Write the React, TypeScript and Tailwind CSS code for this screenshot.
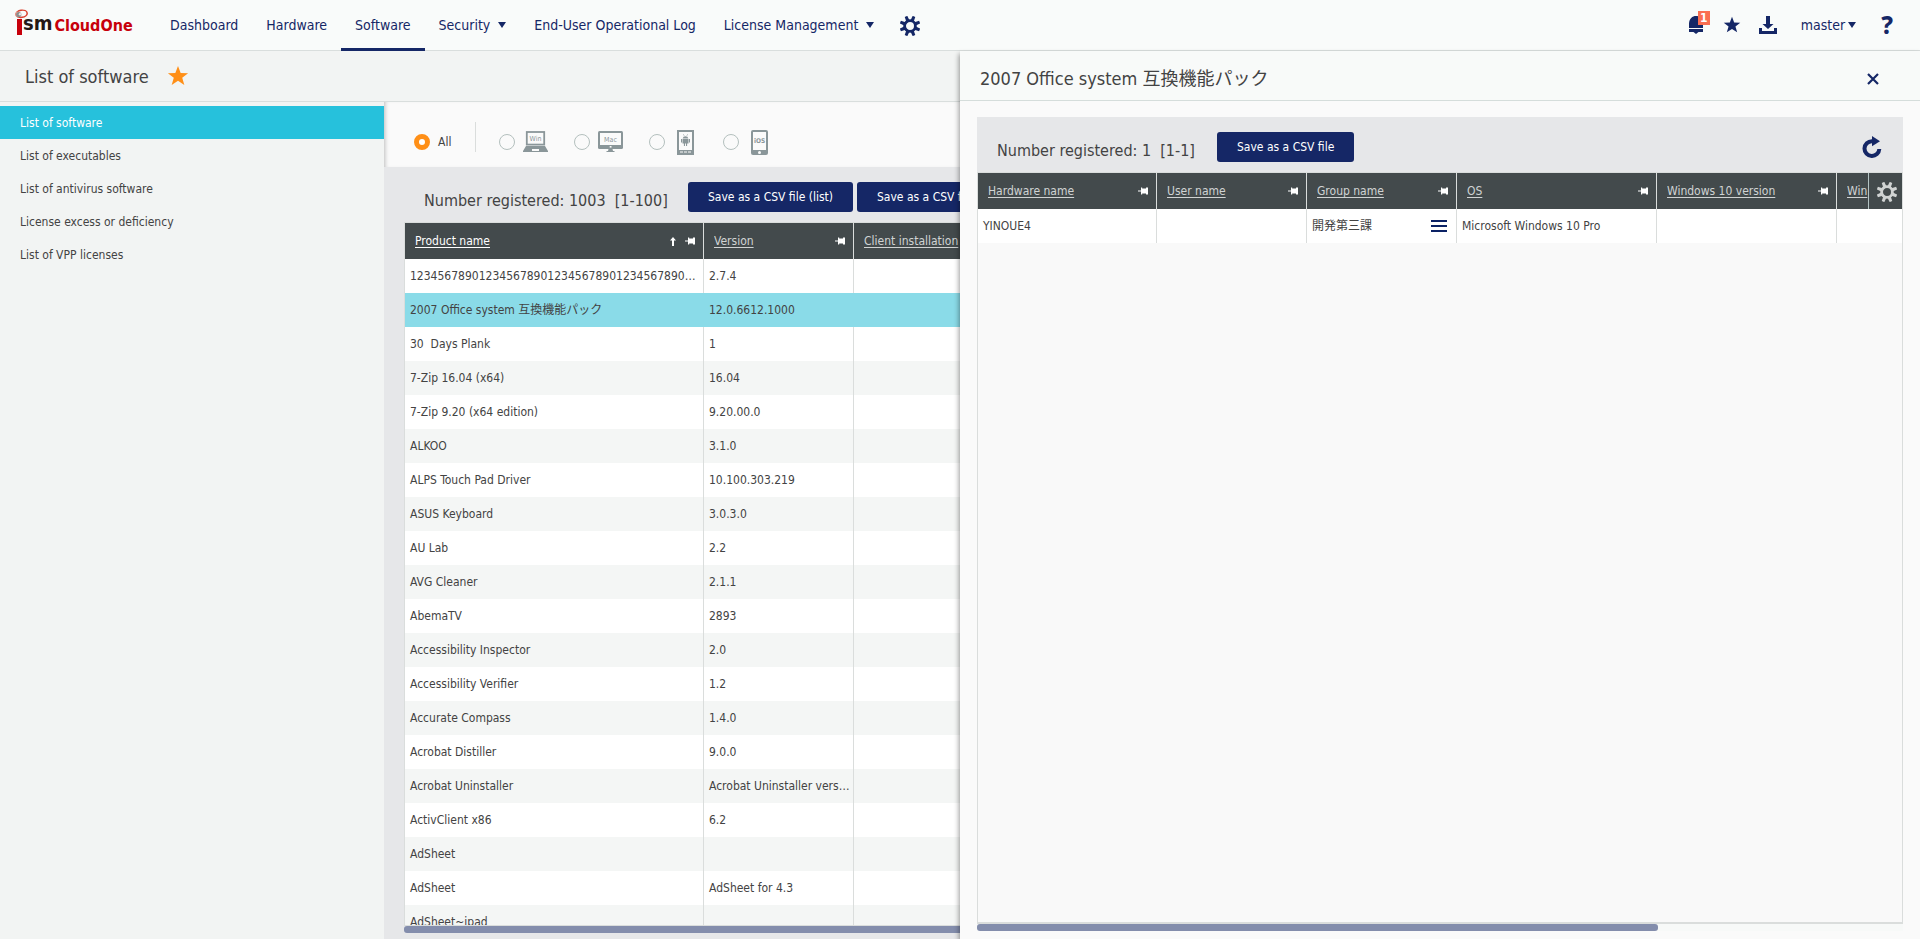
import React from 'react';

const NAV = [
  { label: 'Dashboard' },
  { label: 'Hardware' },
  { label: 'Software', active: true },
  { label: 'Security', menu: true },
  { label: 'End-User Operational Log' },
  { label: 'License Management', menu: true },
];

const SIDE = [
  'List of software',
  'List of executables',
  'List of antivirus software',
  'License excess or deficiency',
  'List of VPP licenses',
];

const ROWS: [string, string][] = [
  ['12345678901234567890123456789012345678901234567890', '2.7.4'],
  ['2007 Office system 互換機能パック', '12.0.6612.1000'],
  ['30\u00a0 Days Plank', '1'],
  ['7-Zip 16.04 (x64)', '16.04'],
  ['7-Zip 9.20 (x64 edition)', '9.20.00.0'],
  ['ALKOO', '3.1.0'],
  ['ALPS Touch Pad Driver', '10.100.303.219'],
  ['ASUS Keyboard', '3.0.3.0'],
  ['AU Lab', '2.2'],
  ['AVG Cleaner', '2.1.1'],
  ['AbemaTV', '2893'],
  ['Accessibility Inspector', '2.0'],
  ['Accessibility Verifier', '1.2'],
  ['Accurate Compass', '1.4.0'],
  ['Acrobat Distiller', '9.0.0'],
  ['Acrobat Uninstaller', 'Acrobat Uninstaller version 1'],
  ['ActivClient x86', '6.2'],
  ['AdSheet', ''],
  ['AdSheet', 'AdSheet for 4.3'],
  ['AdSheet~ipad', ''],
];

const STAR = 'M12 1l2.9 7.6 8.1.3-6.4 5 2.3 7.9L12 17.2 5.1 21.8l2.3-7.9L1 8.9l8.1-.3z';

function Star({ className }: { className: string }) {
  return (
    <svg viewBox="0 0 24 24" className={className} fill="currentColor" aria-hidden="true">
      <path d={STAR} />
    </svg>
  );
}

function Caret() {
  return (
    <svg viewBox="0 0 8 6" className="h-[6px] w-[8px]" fill="currentColor" aria-hidden="true">
      <path d="M0 0h8L4 6z" />
    </svg>
  );
}

function Gear({ className }: { className: string }) {
  return (
    <svg viewBox="0 0 20 20" className={className} aria-hidden="true">
      <circle cx="10" cy="10" r="5.4" fill="none" stroke="currentColor" strokeWidth="2.8" />
      <g fill="currentColor">
        {[22.5, 67.5, 112.5, 157.5, 202.5, 247.5, 292.5, 337.5].map((a) => (
          <path key={a} d="M8.3 4.4L8.600 -0.4h2.800l.3 4.8z" transform={`rotate(${a} 10 10)`} />
        ))}
      </g>
    </svg>
  );
}

function Pin() {
  return (
    <svg viewBox="0 0 10 8" className="h-[8px] w-[10px] shrink-0 text-white" fill="currentColor" aria-hidden="true">
      <path d="M0 3.5h3v-3h1.2v1H8V.5h2v7H8v-1H4.2v1H3v-3H0z" />
    </svg>
  );
}

function SortUp() {
  return (
    <svg viewBox="0 0 6 9" className="h-[9px] w-[6px] shrink-0 text-white" fill="currentColor" aria-hidden="true">
      <path d="M3 0l3 3.4H4V9H2V3.4H0z" />
    </svg>
  );
}

function WinIcon() {
  return (
    <svg viewBox="0 0 25 22" className="h-[22px] w-[25px]" aria-hidden="true">
      <rect x="3.8" y="1" width="17.4" height="12.6" fill="none" stroke="#8a9699" strokeWidth="1.8" />
      <path d="M3 15h19l3 5v1H0v-1z" fill="#8a9699" />
      <rect x="9" y="18" width="7" height="2" fill="#fafafa" />
      <text x="12.5" y="10" fontSize="7" textAnchor="middle" fill="#8a9699">Win</text>
    </svg>
  );
}

function MacIcon() {
  return (
    <svg viewBox="0 0 25 22" className="h-[22px] w-[25px]" aria-hidden="true">
      <rect x="0" y="0" width="25" height="18" rx="1.5" fill="#8a9699" />
      <rect x="2" y="2" width="21" height="12" fill="#fafafa" />
      <rect x="11.7" y="15" width="1.8" height="1.6" fill="#fafafa" />
      <path d="M10.5 18h4l.5 2h1.5v1h-8v-1H10z" fill="#8a9699" />
      <text x="12.5" y="10.8" fontSize="7" textAnchor="middle" fill="#8a9699">Mac</text>
    </svg>
  );
}

function AndroidIcon() {
  return (
    <svg viewBox="0 0 17 25" className="h-[25px] w-[17px]" fill="#8a9699" aria-hidden="true">
      <rect width="17" height="25" />
      <rect x="2" y="2" width="13" height="18" fill="#fafafa" />
      <path d="M5.6 8.4a3 3 0 0 1 5.8 0zM5.5 9h6v4.4h-1.4V16H9v-2.6H8V16H6.9v-2.6H5.5zM4 9h1v3.6H4zM12 9h1v3.6h-1zM6 4.6l.6-.4 1 1.6H7zM11 4.6l-.6-.4-1 1.6h.6z" />
      <path d="M3 21.5h3v1H3zM7 21.5h3v1H7zM11 21.5h3v1h-3z" fill="#fafafa" />
    </svg>
  );
}

function IosIcon() {
  return (
    <svg viewBox="0 0 17 25" className="h-[25px] w-[17px]" aria-hidden="true">
      <rect width="17" height="25" rx="2" fill="#8a9699" />
      <rect x="2" y="2" width="13" height="18" fill="#fafafa" />
      <circle cx="8.5" cy="22.4" r="1.5" fill="#fafafa" />
      <text x="8.5" y="12.8" fontSize="6.5" fontWeight="bold" textAnchor="middle" fill="#8a9699">iOS</text>
    </svg>
  );
}

function Logo() {
  return (
    <a href="#home" aria-label="ISM CloudOne" className="flex h-[50px] w-[124px] items-start pt-[9px]">
      <svg viewBox="0 0 14 27" className="h-[27px] w-[14px] shrink-0" aria-hidden="true">
        <rect x="3" y="10" width="5" height="16" fill="#c7000b" />
        <ellipse cx="7.6" cy="4.8" rx="5.6" ry="3.6" transform="rotate(-8 7.6 4.8)" fill="none" stroke="#d9412f" strokeWidth="1.5" />
        <path d="M4 8.200C1.500 7 1.200 4.500 3.500 2.600" fill="none" stroke="#e79b8c" strokeWidth="1.4" />
        <circle cx="4.8" cy="5.6" r="2.600" fill="#8d8d8d" />
        <circle cx="6" cy="5.2" r="1.200" fill="#e8e8e8" />
      </svg>
      <span className="-ml-[5px] -mt-[1px] font-['DejaVu_Sans_Condensed'] text-[20px] font-bold leading-[30px] text-[#231815]">
        sm
      </span>
      <span className="ml-[2px] mt-[5px] font-['DejaVu_Sans_Condensed'] text-[16px] font-bold leading-[24px] text-[#c7000b]">
        CloudOne
      </span>
    </a>
  );
}

function CsvButton({ children }: { children: React.ReactNode }) {
  return (
    <button className="h-[30px] shrink-0 whitespace-nowrap rounded-[3px] bg-[#152766] px-5 text-[12px] text-white">
      {children}
    </button>
  );
}

function HeadCell({ label, sorted, pin = true }: { label: string; sorted?: boolean; pin?: boolean }) {
  return (
    <th
      scope="col"
      className="h-[36px] border-r border-[#dadddc] bg-[#434a4c] p-0 text-left font-normal last:border-r-0"
    >
      <div className="flex items-center gap-[9px] pl-[10px] pr-2">
        <a
          href="#sort"
          className={
            sorted
              ? 'flex-1 truncate text-white underline underline-offset-2'
              : 'flex-1 truncate text-[#d0d3d3] underline underline-offset-2'
          }
        >
          {label}
        </a>
        {sorted && <SortUp />}
        {pin && <Pin />}
      </div>
    </th>
  );
}

function OsRadio({ label, icon }: { label: string; icon: React.ReactNode }) {
  return (
    <label className="flex items-center">
      <input
        type="radio"
        name="os"
        aria-label={label}
        className="h-4 w-4 appearance-none rounded-full border border-[#b4c0be] bg-[#fafafa]"
      />
      {icon}
    </label>
  );
}

function SoftwareList() {
  return (
    <main className="relative flex min-w-0 flex-1 flex-col">
      <div className="flex h-[65px] shrink-0 items-center bg-[#fafafa] pl-[30px] pt-[15px] shadow-[inset_4px_0_4px_-3px_rgba(0,0,0,0.25)]">
        <label className="flex items-center gap-2 text-[12px]">
          <input
            type="radio"
            name="os"
            defaultChecked
            className="h-4 w-4 appearance-none rounded-full border-[5px] border-[#ff8f17] bg-white"
          />
          All
        </label>
        <div className="mb-[10px] ml-6 mr-[23px] h-[30px] w-px bg-[#dadddc]" />
        <div className="flex items-center">
          <div className="w-[75px]"><OsRadio label="Windows" icon={<span className="ml-2"><WinIcon /></span>} /></div>
          <div className="w-[75px]"><OsRadio label="Mac" icon={<span className="ml-2"><MacIcon /></span>} /></div>
          <div className="w-[74px]"><OsRadio label="Android" icon={<span className="ml-3"><AndroidIcon /></span>} /></div>
          <div className="w-[75px]"><OsRadio label="iOS" icon={<span className="ml-3"><IosIcon /></span>} /></div>
        </div>
      </div>
      <div className="flex min-h-0 flex-1 flex-col bg-[#e6e7e9] pb-[6px] pl-5">
        <div className="flex h-[55px] shrink-0 items-center pl-5 pt-[5px]">
          <h2 className="w-[264px] shrink-0 whitespace-nowrap pt-[7px] text-[16px]">
            Number registered: 1003&nbsp; [1-100]
          </h2>
          <div className="flex gap-1">
            <CsvButton>Save as a CSV file (list)</CsvButton>
            <CsvButton>Save as a CSV file (all)</CsvButton>
          </div>
        </div>
        <div className="min-h-0 flex-1 overflow-hidden border border-r-0 border-[#dadddc]">
          <table className="w-full table-fixed border-separate border-spacing-0 text-[12px]">
            <colgroup>
              <col className="w-[299px]" />
              <col className="w-[150px]" />
              <col />
            </colgroup>
            <thead>
              <tr>
                <HeadCell label="Product name" sorted />
                <HeadCell label="Version" />
                <HeadCell label="Client installation" />
              </tr>
            </thead>
            <tbody>
              {ROWS.map(([name, version], i) => {
                const bg = i === 1 ? 'bg-[#8adbe8]' : i % 2 ? 'bg-[#f4f6f5]' : 'bg-white';
                const line = i === 1 ? 'border-[#8adbe8]' : 'border-[#dadddc]';
                return (
                  <tr key={i} className={bg}>
                    <td className={'h-[34px] truncate border-r py-0 pl-[5px] pr-[2px] ' + line}>{name}</td>
                    <td className={'h-[34px] truncate border-r py-0 pl-[5px] pr-[2px] ' + line}>{version}</td>
                    <td className="h-[34px] p-0" />
                  </tr>
                );
              })}
            </tbody>
          </table>
        </div>
        <div className="h-[7px] shrink-0 rounded-l-[3px] bg-[#838dac]" />
      </div>
    </main>
  );
}

function DetailPanel() {
  return (
    <section
      aria-label="Software detail"
      className="absolute inset-y-0 right-0 flex w-1/2 flex-col bg-[#fafafa] shadow-[-1px_3px_5px_rgba(0,0,0,0.4)]"
    >
      <div className="flex h-[50px] shrink-0 items-center justify-between border-b border-[#d5dddb] bg-[#f8faf9] pl-5 pr-[41px] pt-[6px]">
        <h2 className="text-[18px]">2007 Office system 互換機能パック</h2>
        <button aria-label="Close" className="text-[#152766]">
          <svg viewBox="0 0 12 12" className="h-[12px] w-[12px]" fill="none" stroke="currentColor" strokeWidth="2.2" aria-hidden="true">
            <path d="M1 1l10 10M11 1L1 11" />
          </svg>
        </button>
      </div>
      <div className="flex min-h-0 flex-1 flex-col pb-2 pl-[17px] pr-[17px] pt-4">
        <div className="flex h-[55px] shrink-0 items-center bg-[#e6e7e9] pl-5 pr-[21px] pt-[5px]">
          <h3 className="w-[220px] shrink-0 whitespace-nowrap pt-[7px] text-[16px]">
            Number registered: 1&nbsp; [1-1]
          </h3>
          <CsvButton>Save as a CSV file</CsvButton>
          <button aria-label="Reload" className="ml-auto text-[#152766]">
            <svg viewBox="0 0 20 22" className="h-[22px] w-[20px]" aria-hidden="true">
              <path d="M17.3 13A7.4 7.4 0 1 1 10 5.2" fill="none" stroke="currentColor" strokeWidth="4" />
              <path d="M10 0l8 5.3-8 4.9z" fill="currentColor" />
            </svg>
          </button>
        </div>
        <div className="relative min-h-0 flex-1 overflow-hidden border border-b-2 border-[#dadddc] bg-[#f9f9f9]">
          <table className="w-full table-fixed border-separate border-spacing-0 text-[12px]">
            <colgroup>
              <col className="w-[179px]" />
              <col className="w-[150px]" />
              <col className="w-[150px]" />
              <col className="w-[200px]" />
              <col className="w-[180px]" />
              <col />
            </colgroup>
            <thead>
              <tr>
                <HeadCell label="Hardware name" />
                <HeadCell label="User name" />
                <HeadCell label="Group name" />
                <HeadCell label="OS" />
                <HeadCell label="Windows 10 version" />
                <HeadCell label="Win" pin={false} />
              </tr>
            </thead>
            <tbody>
              <tr className="bg-white">
                <td className="h-[34px] border-r border-[#dadddc] py-0 pl-[5px]">YINOUE4</td>
                <td className="h-[34px] border-r border-[#dadddc] p-0" />
                <td className="h-[34px] border-r border-[#dadddc] py-0 pl-[5px] pr-[9px]">
                  <div className="flex items-center justify-between">
                    開発第三課
                    <button aria-label="Group menu" className="text-[#0b2265]">
                      <svg viewBox="0 0 16 13" className="h-[13px] w-[16px]" fill="currentColor" aria-hidden="true">
                        <path d="M0 0h16v2H0zM0 5h16v2H0zM0 10h16v2H0z" />
                      </svg>
                    </button>
                  </div>
                </td>
                <td className="h-[34px] border-r border-[#dadddc] py-0 pl-[5px]">Microsoft Windows 10 Pro</td>
                <td className="h-[34px] border-r border-[#dadddc] p-0" />
                <td className="h-[34px] p-0" />
              </tr>
            </tbody>
          </table>
          <button
            aria-label="Column settings"
            className="absolute right-0 top-0 flex h-[36px] w-[34px] items-center justify-center border-l border-[#b4c4c4] bg-[#434a4c] pl-[2px] pt-[2px] text-[#d0d3d3]"
          >
            <Gear className="h-5 w-5" />
          </button>
        </div>
        <div className="h-[7px] shrink-0 bg-[#f7f9f8]">
          <div className="h-full w-[73.5%] rounded-[3px] bg-[#838dac]" />
        </div>
      </div>
    </section>
  );
}

export default function App() {
  return (
    <div className="flex h-screen flex-col overflow-hidden bg-[#f2f4f3] font-['DejaVu_Sans_Condensed','Noto_Sans_CJK_JP',sans-serif] text-[#434343]">
      <header className="flex h-[51px] shrink-0 items-start justify-between border-b border-[#d9dedd] bg-[#f9fbfa] pl-[14px] pr-[27px] text-[14px] text-[#152766]">
        <div className="flex">
          <Logo />
          <nav className="ml-[18px] flex">
            {NAV.map((n) => (
              <a
                key={n.label}
                href={'#' + n.label}
                className={
                  n.active
                    ? 'flex h-[51px] items-center gap-2 whitespace-nowrap border-b-[3px] border-[#152766] px-[14px] pt-[2px]'
                    : 'flex h-[51px] items-center gap-2 whitespace-nowrap border-b-[3px] border-transparent px-[14px] pt-[2px]'
                }
              >
                {n.label}
                {n.menu && <Caret />}
              </a>
            ))}
            <button aria-label="Settings" className="ml-3 h-[51px]">
              <Gear className="h-5 w-5" />
            </button>
          </nav>
        </div>
        <div className="flex h-[50px] items-center">
          <button aria-label="Notifications" className="relative mr-5">
            <svg viewBox="0 0 14 18" className="h-[18px] w-[14px]" fill="currentColor" aria-hidden="true">
              <path d="M0 12V7.5C.3 2.500 3.300 0 7 0s6.700 2.500 7 7.500V12zM0 13h14v3H9.500L7 18l-2.500-2H0z" />
            </svg>
            <span className="absolute -right-[7px] -top-[5px] h-[14px] w-[12px] bg-[#fa6e50] text-center text-[12px] font-bold leading-[14px] text-white">
              1
            </span>
          </button>
          <button aria-label="Favorites" className="mr-[18px]">
            <Star className="h-[18px] w-[18px]" />
          </button>
          <button aria-label="Downloads" className="mr-6">
            <svg viewBox="0 0 18 18" className="h-[18px] w-[18px]" fill="currentColor" aria-hidden="true">
              <path d="M7 0h4v8h3.500L9 13 3.500 8H7zM0 12h3v3h12v-3h3v6H0z" />
            </svg>
          </button>
          <button className="mr-[25px] flex items-center gap-[3px]">
            master
            <Caret />
          </button>
          <button aria-label="Help" className="font-['Noto_Sans'] text-[24px] font-extrabold leading-[24px]">
            ?
          </button>
        </div>
      </header>

      <div className="relative flex min-h-0 flex-1 flex-col">
        <div className="flex h-[51px] shrink-0 items-center gap-[18px] border-b border-[#d9dedd] pl-[25px]">
          <h1 className="text-[18px]">List of software</h1>
          <button aria-label="Favorite" className="text-[#ff8f17]">
            <Star className="h-[22px] w-[22px]" />
          </button>
        </div>
        <div className="flex min-h-0 flex-1">
          <aside className="w-1/5 shrink-0 pt-1">
            <ul className="text-[12px]">
              {SIDE.map((s, i) => (
                <li key={s}>
                  <a
                    href={'#side-' + i}
                    className={
                      i === 0
                        ? 'flex h-[33px] items-center bg-[#26c1dc] pl-5 text-white'
                        : 'flex h-[33px] items-center pl-5'
                    }
                  >
                    {s}
                  </a>
                </li>
              ))}
            </ul>
          </aside>
          <SoftwareList />
        </div>
        <DetailPanel />
      </div>
    </div>
  );
}
